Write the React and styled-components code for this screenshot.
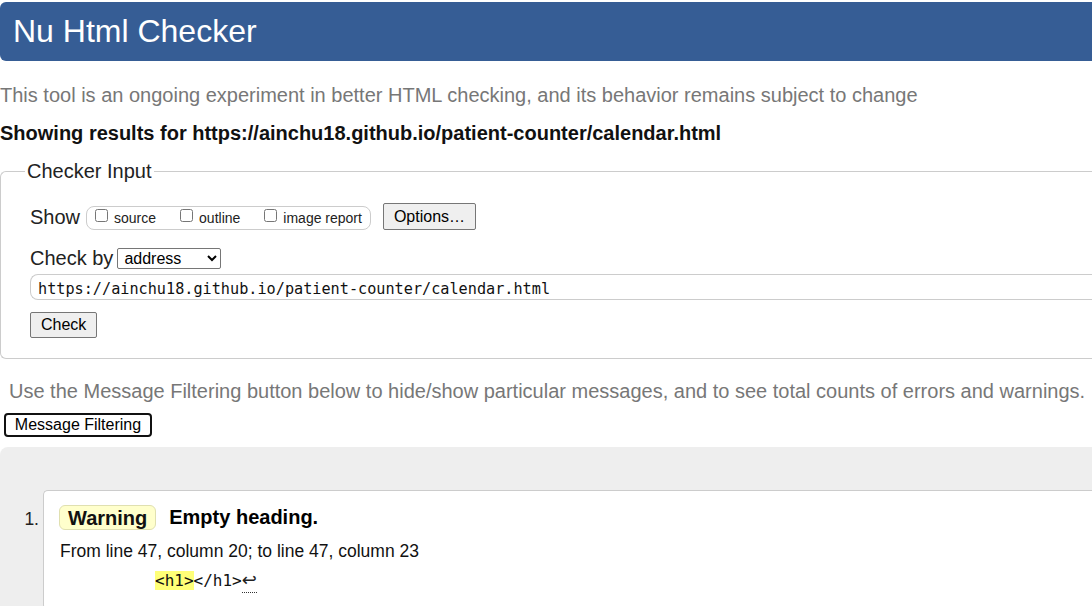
import React from "react";
import styled, { createGlobalStyle } from "styled-components";

const Global = createGlobalStyle`
  html, body { margin: 0; padding: 0; background: #fff; overflow: hidden; }
  body { font-family: "Liberation Sans", Arial, sans-serif; color: #000; }
`;

const Page = styled.div`
  width: 1130px;
`;

const Header = styled.h1`
  margin: 2px 0 0;
  height: 59px;
  line-height: 59px;
  padding-left: 13px;
  background: #365d95;
  color: #fff;
  font-weight: normal;
  font-size: 32px;
  border-radius: 6px 0 0 6px;
`;

const Intro = styled.p`
  margin: ${(p) => p.$mt ?? 22}px 0 0;
  font-size: 20px;
  line-height: 24px;
  color: #777;
  padding-left: ${(p) => p.$indent || 0}px;
`;

const Results = styled.p`
  margin: 14px 0 0;
  font-size: 20px;
  line-height: 24px;
  font-weight: bold;
  color: #111;
`;

const Fieldset = styled.fieldset`
  margin: 14px 0 0;
  padding: 0 0 20px 0;
  border: 1px solid #ccc;
  border-right: none;
  border-radius: 6px 0 0 6px;
`;

const Legend = styled.legend`
  margin-left: 24px;
  padding: 0 2px;
  font-size: 20px;
  line-height: 24px;
  color: #222;
`;

const Inner = styled.div`
  padding: 20px 0 0 29px;
`;

const Row = styled.div`
  display: flex;
  align-items: center;
  margin-top: ${(p) => p.$mt || 0}px;
`;

const Label = styled.span`
  font-size: 20px;
  line-height: 24px;
  color: #222;
  margin-right: ${(p) => p.$mr || 0}px;
`;

const CheckGroup = styled.div`
  display: flex;
  align-items: center;
  height: 22px;
  padding: 0 8px;
  border: 1px solid #ccc;
  border-radius: 8px;
  margin-top: 2px;
`;

const Opt = styled.label`
  display: flex;
  align-items: center;
  font-size: 14px;
  color: #222;
  margin-right: ${(p) => p.$mr || 0}px;
`;

const Box = styled.input`
  width: 13px;
  height: 13px;
  margin: 0 6px 0 0;
  position: relative;
  top: -2px;
`;

const Button = styled.button`
  font-family: "Liberation Sans", Arial, sans-serif;
  font-size: 16px;
  height: ${(p) => p.$h || 26}px;
  padding: 0 ${(p) => p.$px || 10}px;
  background: #efefef;
  border: 1px solid #767676;
  border-radius: 2px;
  color: #000;
  margin-left: ${(p) => p.$ml || 0}px;
`;

const Select = styled.select`
  font-family: "Liberation Sans", Arial, sans-serif;
  font-size: 16px;
  width: 104px;
  height: 21px;
  margin-left: 4px;
  border: 1px solid #767676;
  border-radius: 2px;
  background: #fff;
  color: #000;
  padding: 0 2px;
`;

const Url = styled.div`
  margin-top: 4px;
  height: 24px;
  border: 1px solid #ccc;
  border-right: none;
  border-radius: 8px 0 0 8px;
  font-family: "DejaVu Sans Mono", "Liberation Mono", monospace;
  font-size: 15.2px;
  line-height: 28px;
  padding-left: 7px;
  color: #111;
`;

const CheckWrap = styled.div`
  margin-top: 12px;
`;

const FilterButton = styled.button`
  margin: 10px 0 0 4px;
  height: 24px;
  width: 148px;
  font-family: "Liberation Sans", Arial, sans-serif;
  font-size: 16px;
  background: #fff;
  border: 2px solid #111;
  border-radius: 4px;
  color: #000;
  padding: 0;
  display: block;
`;

const MessagesArea = styled.div`
  margin-top: 10px;
  background: #eee;
  border-radius: 8px 0 0 0;
  padding: 43px 0 40px 0;
`;

const List = styled.ol`
  margin: 0;
  padding: 0;
  list-style: none;
`;

const Item = styled.li`
  display: flex;
  align-items: flex-start;
`;

const Num = styled.span`
  width: 39px;
  text-align: right;
  padding-right: 4px;
  font-size: 17.5px;
  line-height: 20px;
  margin-top: 19px;
  color: #222;
`;

const Card = styled.div`
  flex: 1;
  background: #fff;
  border: 1px solid #ccc;
  border-right: none;
  border-radius: 5px 0 0 5px;
  padding: 14px 0 16px 15px;
`;

const TitleRow = styled.div`
  display: flex;
  align-items: center;
`;

const Badge = styled.span`
  display: inline-block;
  height: 23px;
  line-height: 25px;
  padding: 0 8px;
  background: #ffffcc;
  border: 1px solid #e0e0b0;
  border-radius: 6px;
  font-weight: bold;
  font-size: 20px;
  color: #111;
`;

const Title = styled.span`
  margin-left: 13px;
  font-weight: bold;
  font-size: 20px;
  color: #000;
`;

const Location = styled.p`
  margin: 11px 0 0 1px;
  font-size: 17.5px;
  line-height: 20px;
  color: #111;
`;

const Extract = styled.p`
  margin: 10px 0 0 96px;
  font-family: "DejaVu Sans Mono", "Liberation Mono", monospace;
  font-size: 16px;
  line-height: 19px;
  color: #111;
`;

const Mark = styled.mark`
  background: #ffff77;
  color: #111;
`;

const Lf = styled.span`
  font-family: "Liberation Sans", "DejaVu Sans", sans-serif;
  border-bottom: 1px dotted #333;
  font-size: 18px;
  line-height: 17px;
  display: inline-block;
  padding-bottom: 3px;
  color: #222;
`;

export default function App() {
  return (
    <Page>
      <Global />
      <Header>Nu Html Checker</Header>
      <Intro>
        This tool is an ongoing experiment in better HTML checking, and its
        behavior remains subject to change
      </Intro>
      <Results>
        Showing results for https://ainchu18.github.io/patient-counter/calendar.html
      </Results>
      <Fieldset>
        <Legend>Checker Input</Legend>
        <Inner>
          <Row>
            <Label $mr={6}>Show</Label>
            <CheckGroup>
              <Opt $mr={24}>
                <Box type="checkbox" />
                source
              </Opt>
              <Opt $mr={24}>
                <Box type="checkbox" />
                outline
              </Opt>
              <Opt>
                <Box type="checkbox" />
                image report
              </Opt>
            </CheckGroup>
            <Button $ml={12} $h={27} $px={10}>
              Options…
            </Button>
          </Row>
          <Row $mt={16}>
            <Label>Check by</Label>
            <Select defaultValue="address">
              <option value="address">address</option>
              <option value="file">file upload</option>
              <option value="text">text input</option>
            </Select>
          </Row>
          <Url>https://ainchu18.github.io/patient-counter/calendar.html</Url>
          <CheckWrap>
            <Button $px={10}>Check</Button>
          </CheckWrap>
        </Inner>
      </Fieldset>
      <Intro $mt={20} $indent={9}>
        Use the Message Filtering button below to hide/show particular
        messages, and to see total counts of errors and warnings.
      </Intro>
      <FilterButton>Message Filtering</FilterButton>
      <MessagesArea>
        <List>
          <Item>
            <Num>1.</Num>
            <Card>
              <TitleRow>
                <Badge>Warning</Badge>
                <Title>Empty heading.</Title>
              </TitleRow>
              <Location>From line 47, column 20; to line 47, column 23</Location>
              <Extract>
                <Mark>&lt;h1&gt;</Mark>&lt;/h1&gt;<Lf>↩</Lf>
              </Extract>
            </Card>
          </Item>
        </List>
      </MessagesArea>
    </Page>
  );
}
